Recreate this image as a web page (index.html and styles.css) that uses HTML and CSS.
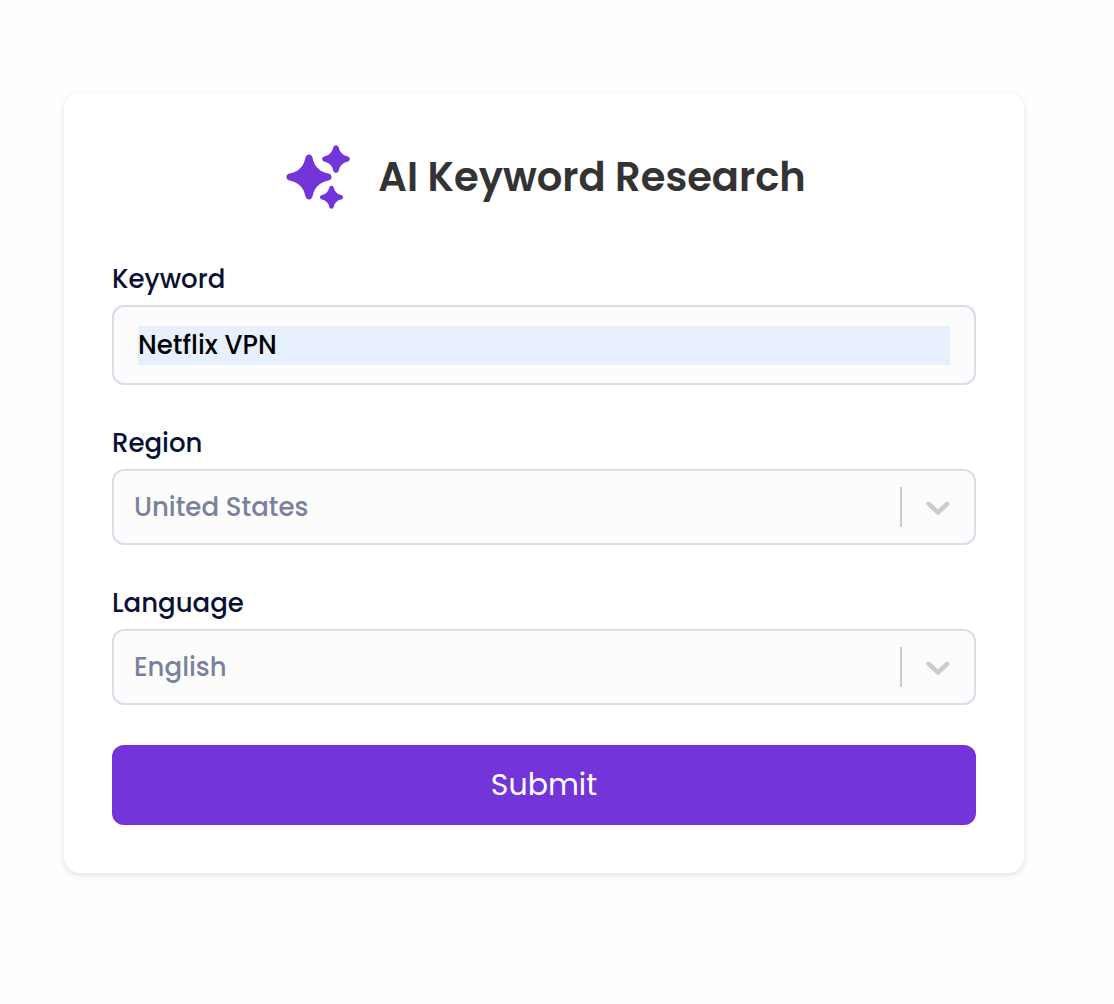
FILE: index.html
```html
<!DOCTYPE html>
<html lang="en">
<head>
  <meta charset="utf-8">
  <meta name="viewport" content="width=device-width, initial-scale=1">
  <title>AI Keyword Research</title>
  <link rel="stylesheet" href="styles.css">
</head>
<body>
  <main class="page">
    <form class="card">
      <header class="card-header">
        <svg class="sparkles" viewBox="0 0 72 72" aria-hidden="true">
          <defs>
            <path id="star" d="M0-23C1.700-23 3-21.900 3.500-20C5-14 6.500-11.500 9-9C11.500-6.500 14-5 20-3.500C21.900-3 23-1.700 23 0C23 1.700 21.900 3 20 3.500C14 5 11.500 6.500 9 9C6.500 11.500 5 14 3.500 20C3 21.900 1.700 23 0 23C-1.700 23-3 21.900-3.500 20C-5 14-6.500 11.500-9 9C-11.500 6.500-14 5-20 3.500C-21.900 3-23 1.700-23 0C-23-1.700-21.900-3-20-3.500C-14-5-11.500-6.500-9-9C-6.500-11.500-5-14-3.500-20C-3-21.900-1.700-23 0-23Z"/>
            <path id="star-small" d="M0-23C2.200-23 4-21.500 4.600-19C5.800-14 7.200-12 9.600-9.600C12-7.200 14-5.800 19-4.600C21.500-4 23-2.200 23 0C23 2.200 21.500 4 19 4.600C14 5.800 12 7.200 9.600 9.600C7.200 12 5.800 14 4.600 19C4 21.500 2.200 23 0 23C-2.200 23-4 21.500-4.600 19C-5.800 14-7.200 12-9.600 9.600C-12 7.200-14 5.800-19 4.600C-21.500 4-23 2.200-23 0C-23-2.200-21.500-4-19-4.600C-14-5.800-12-7.200-9.600-9.600C-7.200-12-5.800-14-4.600-19C-4-21.500-2.200-23 0-23Z"/>
          </defs>
          <use href="#star" transform="translate(27 36) scale(.98)"/>
          <use href="#star-small" transform="translate(54 18) scale(.6)"/>
          <use href="#star-small" transform="translate(49.500 56.300) scale(.5)"/>
        </svg>
        <h1 class="title">AI Keyword Research</h1>
      </header>

      <div class="field">
        <label class="label" for="keyword">Keyword</label>
        <div class="control input-box">
          <input class="input" id="keyword" type="text" value="Netflix VPN">
        </div>
      </div>

      <div class="field">
        <label class="label" for="region">Region</label>
        <div class="control select-box">
          <select class="select" id="region"><option>United States</option></select>
          <svg class="chevron" viewBox="0 0 20 20" aria-hidden="true"><path d="M4.516 7.548c0.436-0.446 1.043-0.481 1.576 0l3.908 3.747 3.908-3.747c0.533-0.481 1.141-0.446 1.574 0 0.436 0.445 0.408 1.197 0 1.615-0.406 0.418-4.695 4.502-4.695 4.502-0.217 0.223-0.502 0.335-0.787 0.335s-0.570-0.112-0.789-0.335c0 0-4.287-4.084-4.695-4.502s-0.436-1.170 0-1.615z"/></svg>
        </div>
      </div>

      <div class="field">
        <label class="label" for="language">Language</label>
        <div class="control select-box">
          <select class="select" id="language"><option>English</option></select>
          <svg class="chevron" viewBox="0 0 20 20" aria-hidden="true"><path d="M4.516 7.548c0.436-0.446 1.043-0.481 1.576 0l3.908 3.747 3.908-3.747c0.533-0.481 1.141-0.446 1.574 0 0.436 0.445 0.408 1.197 0 1.615-0.406 0.418-4.695 4.502-4.695 4.502-0.217 0.223-0.502 0.335-0.787 0.335s-0.570-0.112-0.789-0.335c0 0-4.287-4.084-4.695-4.502s-0.436-1.170 0-1.615z"/></svg>
        </div>
      </div>

      <button class="submit" type="button">Submit</button>
    </form>
  </main>
</body>
</html>
```
FILE: styles.css
```css
* {
  box-sizing: border-box;
}

body {
  margin: 0;
  background: #fefefe;
  font-family: Poppins, Inter, "Liberation Sans", sans-serif;
}

.page {
  padding: 93px 90px 93px 64px;
}

.card {
  display: flex;
  flex-direction: column;
  gap: 40px;
  padding: 48px;
  border-radius: 16px;
  background: #fff;
  box-shadow: 0 2px 6px rgba(0, 0, 0, 0.13);
}

.card-header {
  display: flex;
  align-items: center;
  justify-content: center;
  gap: 24px;
  margin-bottom: 8px;
}

.sparkles {
  flex: none;
  width: 72px;
  height: 72px;
  fill: #7335da;
}

.title {
  margin: 0;
  color: #333;
  font-size: 40px;
  font-weight: 600;
  line-height: 60px;
}

.field {
  display: flex;
  flex-direction: column;
  gap: 8px;
}

.label {
  color: #091133;
  font-size: 26px;
  font-weight: 500;
  line-height: 36px;
}

.control {
  display: flex;
  align-items: center;
  border: 2px solid #dadce8;
  border-radius: 12px;
  background: #fcfcfc;
}

.input-box {
  height: 80px;
  padding: 0 24px;
}

.input,
.select {
  width: 100%;
  min-width: 0;
  margin: 0;
  border: 0;
  outline: 0;
  padding: 0;
  font-family: inherit;
  font-size: 26px;
  font-weight: 500;
}

.input {
  height: 39px;
  background: #e8f0fe;
  color: #000;
}

.select-box {
  height: 76px;
  padding: 0 16px 0 20px;
}

.select {
  flex: 1;
  height: 40px;
  border-right: 2px solid #ccc;
  appearance: none;
  background: transparent;
  color: #7a819c;
}

.chevron {
  flex: none;
  width: 40px;
  height: 40px;
  margin-left: 16px;
  fill: #ccc;
  pointer-events: none;
}

.submit {
  height: 80px;
  border: 0;
  border-radius: 12px;
  background: #7335da;
  color: #fff;
  font-family: inherit;
  font-size: 30px;
  font-weight: 400;
}
```
